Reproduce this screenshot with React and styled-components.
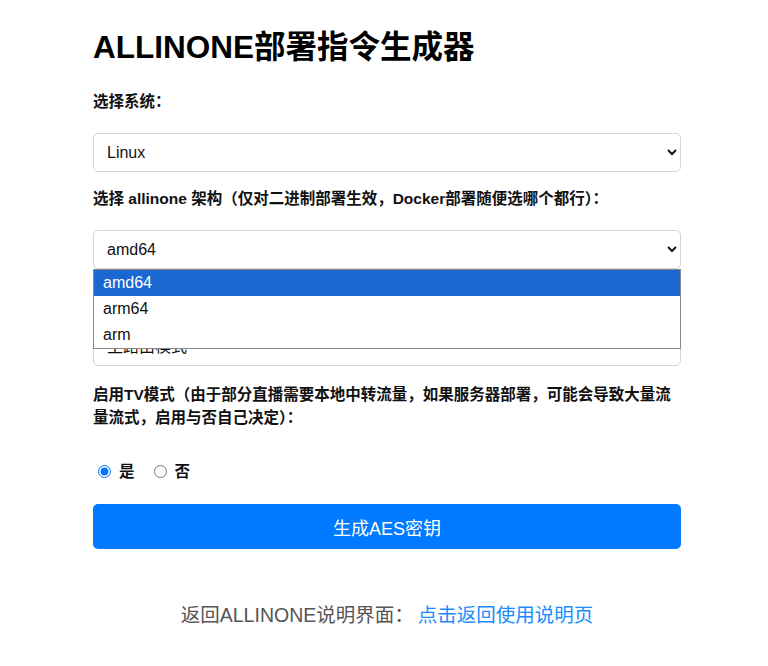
import React, { useState } from 'react';
import styled, { createGlobalStyle } from 'styled-components';

const GlobalStyle = createGlobalStyle`
  body {
    margin: 0;
    background: #ffffff;
    font-family: "Liberation Sans", "Noto Sans CJK SC", sans-serif;
    color: #111;
  }
`;

const Page = styled.div`
  padding: 28px 87px 40px 93px;
`;

const Container = styled.div`
  width: 588px;
  display: flex;
  flex-direction: column;
`;

const Title = styled.h1`
  margin: 0 0 26px;
  font-size: 31.5px;
  line-height: 38px;
  font-weight: bold;
  color: #000;
`;

const FormGroup = styled.div`
  position: relative;
  margin-bottom: ${({ $last }) => ($last ? '0' : '17px')};
`;

const Label = styled.label`
  display: block;
  font-size: 15.5px;
  font-weight: bold;
  line-height: ${({ $tall }) => ($tall ? '23px' : '20px')};
  margin-bottom: 21px;
  color: #111;
`;

const Select = styled.select`
  display: block;
  width: 100%;
  height: 39px;
  padding: 0 8px 0 9px;
  font-family: "Liberation Sans", "Noto Sans CJK SC", sans-serif;
  font-size: 16px;
  color: #111;
  background: #fff;
  border: 1px solid #d4d4d4;
  border-radius: 5px;
`;

const Dropdown = styled.ul`
  position: absolute;
  left: 0;
  right: 0;
  top: 100%;
  margin: 0;
  padding: 0;
  list-style: none;
  background: #fff;
  border: 1px solid #8a8a8a;
  z-index: 10;
`;

const Option = styled.li`
  height: 26px;
  line-height: 26px;
  padding-left: 9px;
  font-size: 16px;
  color: ${({ $active }) => ($active ? '#fff' : '#111')};
  background: ${({ $active }) => ($active ? '#1a67d2' : '#fff')};
`;

const RadioRow = styled.div`
  display: flex;
  align-items: center;
  margin-top: 31px;
  height: 20px;
`;

const RadioLabel = styled.label`
  display: flex;
  align-items: center;
  font-size: 15.5px;
  font-weight: bold;
  margin-right: 14px;
  cursor: pointer;

  input {
    margin: 2px 8px 0 5px;
    width: 13px;
    height: 13px;
  }
`;

const Button = styled.button`
  margin-top: 24px;
  height: 45px;
  width: 100%;
  border: none;
  border-radius: 5px;
  background: #007bff;
  color: #fff;
  font-family: "Liberation Sans", "Noto Sans CJK SC", sans-serif;
  font-size: 18px;
  cursor: pointer;
`;

const Footer = styled.p`
  margin: 50px 0 0;
  text-align: center;
  font-size: 19.5px;
  color: #555;
`;

const Link = styled.a`
  color: #1a8cff;
  text-decoration: none;
  margin-left: 4px;
`;

export default function App() {
  const [tv, setTv] = useState('yes');
  const archs = ['amd64', 'arm64', 'arm'];

  return (
    <>
      <GlobalStyle />
      <Page>
        <Container>
          <Title>ALLINONE部署指令生成器</Title>

          <FormGroup>
            <Label htmlFor="os">选择系统：</Label>
            <Select id="os" defaultValue="linux">
              <option value="linux">Linux</option>
              <option value="windows">Windows</option>
              <option value="mac">macOS</option>
            </Select>
          </FormGroup>

          <FormGroup>
            <Label htmlFor="arch">选择 allinone 架构（仅对二进制部署生效，Docker部署随便选哪个都行）：</Label>
            <Select id="arch" defaultValue="amd64">
              {archs.map((a) => (
                <option key={a} value={a}>{a}</option>
              ))}
            </Select>
            <Dropdown>
              {archs.map((a, i) => (
                <Option key={a} $active={i === 0}>{a}</Option>
              ))}
            </Dropdown>
          </FormGroup>

          <FormGroup>
            <Label htmlFor="mode">选择网络模式：</Label>
            <Select id="mode" defaultValue="main">
              <option value="main">主路由模式</option>
              <option value="side">旁路由模式</option>
            </Select>
          </FormGroup>

          <FormGroup $last>
            <Label $tall>启用TV模式（由于部分直播需要本地中转流量，如果服务器部署，可能会导致大量流量流式，启用与否自己决定）：</Label>
            <RadioRow>
              <RadioLabel>
                <input type="radio" name="tv" checked={tv === 'yes'} onChange={() => setTv('yes')} />
                是
              </RadioLabel>
              <RadioLabel>
                <input type="radio" name="tv" checked={tv === 'no'} onChange={() => setTv('no')} />
                否
              </RadioLabel>
            </RadioRow>
          </FormGroup>

          <Button>生成AES密钥</Button>

          <Footer>
            返回ALLINONE说明界面：<Link href="#">点击返回使用说明页</Link>
          </Footer>
        </Container>
      </Page>
    </>
  );
}
